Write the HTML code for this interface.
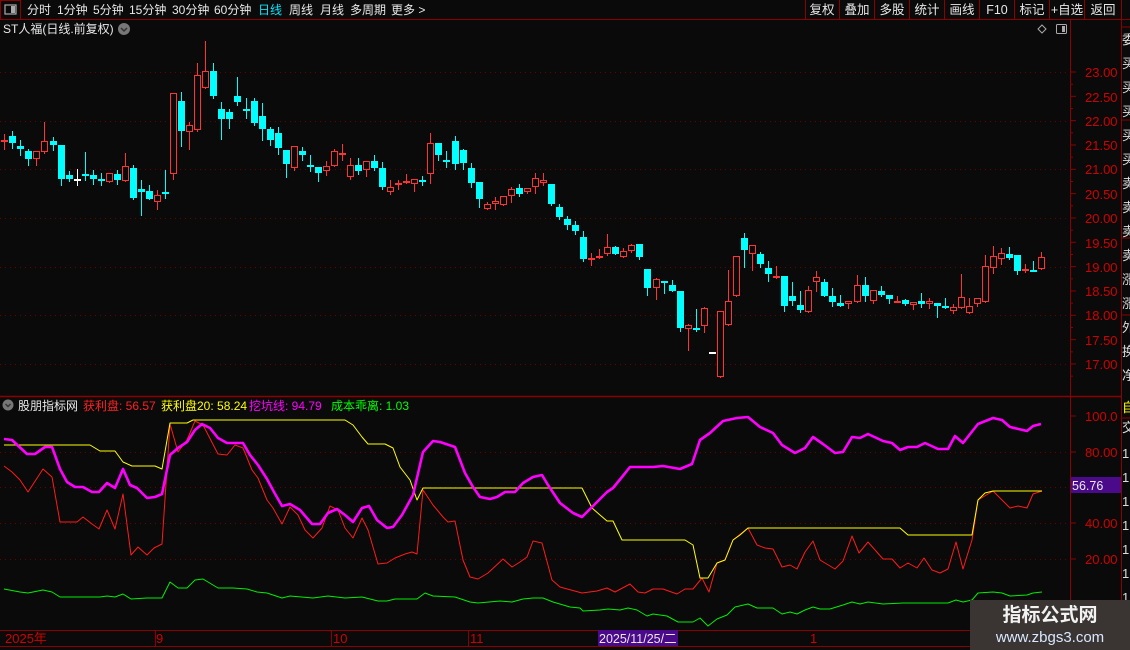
<!DOCTYPE html>
<html><head><meta charset="utf-8">
<style>
html,body{margin:0;padding:0;background:#0a0a0a;width:1130px;height:650px;overflow:hidden;font-family:"Liberation Sans","Noto Sans CJK SC",sans-serif;}
svg{display:block}
text{font-family:"Liberation Sans","Noto Sans CJK SC",sans-serif;}
</style></head><body>
<svg id="s" width="1130" height="650" xmlns="http://www.w3.org/2000/svg">
<rect width="1130" height="650" fill="#0a0a0a"/>
<line x1="0" y1="19.5" x2="1130" y2="19.5" stroke="#8b0000"/>
<rect x="0.5" y="0.5" width="20" height="19" fill="none" stroke="#8b0000"/>
<rect x="5" y="5" width="11" height="9" fill="none" stroke="#aaa" stroke-width="1.2"/>
<rect x="11" y="6" width="4" height="7" fill="#aaa"/>
<g font-size="12" fill="#e8e8e8">
<text x="27" y="14">分时</text><text x="57" y="14">1分钟</text><text x="93" y="14">5分钟</text>
<text x="129" y="14">15分钟</text><text x="172" y="14">30分钟</text><text x="214" y="14">60分钟</text>
<text x="258" y="14" fill="#00e5ff">日线</text><text x="289" y="14">周线</text><text x="320" y="14">月线</text>
<text x="350" y="14">多周期</text><text x="391" y="14">更多 &gt;</text>
</g>
<g stroke="#8b0000">
<line x1="805.5" y1="0" x2="805.5" y2="19"/><line x1="839.5" y1="0" x2="839.5" y2="19"/><line x1="874.5" y1="0" x2="874.5" y2="19"/>
<line x1="909.5" y1="0" x2="909.5" y2="19"/><line x1="944.5" y1="0" x2="944.5" y2="19"/><line x1="979.5" y1="0" x2="979.5" y2="19"/>
<line x1="1014.5" y1="0" x2="1014.5" y2="19"/><line x1="1049.5" y1="0" x2="1049.5" y2="19"/><line x1="1084.5" y1="0" x2="1084.5" y2="19"/>
<line x1="1121.5" y1="0" x2="1121.5" y2="19"/>
</g>
<g font-size="12.5" fill="#e8e8e8" text-anchor="middle">
<text x="822" y="14">复权</text><text x="857" y="14">叠加</text><text x="892" y="14">多股</text><text x="927" y="14">统计</text>
<text x="962" y="14">画线</text><text x="997" y="14">F10</text><text x="1032" y="14">标记</text><text x="1067" y="14">+自选</text><text x="1103" y="14">返回</text>
</g>
<text x="3" y="33" font-size="12" fill="#e8e8e8">ST人福(日线.前复权)</text>
<circle cx="124" cy="29" r="6" fill="#777"/>
<path d="M121 28 L124 31 L127 28" stroke="#333" stroke-width="1.5" fill="none"/>
<path d="M1042 25 L1046 29 L1042 33 L1038 29 Z" fill="none" stroke="#aaa"/>
<rect x="1056.5" y="24.5" width="10" height="9" fill="none" stroke="#aaa" rx="1"/>
<rect x="1062" y="26" width="3" height="6" fill="#aaa"/>
<line x1="1070.5" y1="19" x2="1070.5" y2="650" stroke="#8b0000"/>
<line x1="1121.5" y1="19" x2="1121.5" y2="650" stroke="#8b0000"/>
<line x1="0" y1="396.5" x2="1121" y2="396.5" stroke="#8b0000" stroke-width="1.5"/>
<line x1="0" y1="630.5" x2="1070" y2="630.5" stroke="#8b0000"/>
<line x1="0" y1="646.5" x2="1070" y2="646.5" stroke="#8b0000"/>
<g id="grid" stroke="#6a0000" stroke-dasharray="1,4"></g>
<g id="candles"></g>
<g font-size="13" fill="#d00000">
<text x="1085" y="77">23.00</text><text x="1085" y="102">22.50</text><text x="1085" y="126">22.00</text>
<text x="1085" y="150">21.50</text><text x="1085" y="174">21.00</text><text x="1085" y="199">20.50</text>
<text x="1085" y="223">20.00</text><text x="1085" y="248">19.50</text><text x="1085" y="272">19.00</text>
<text x="1085" y="296">18.50</text><text x="1085" y="320">18.00</text><text x="1085" y="345">17.50</text>
<text x="1085" y="369">17.00</text>
</g>
<g id="ticks" stroke="#8b0000"></g>
<circle cx="8" cy="405" r="5.5" fill="#777"/>
<path d="M5.5 404 L8 406.5 L10.5 404" stroke="#333" stroke-width="1.4" fill="none"/>
<g font-size="12">
<text x="18" y="410" fill="#e8e8e8">股朋指标网</text>
<text x="83" y="410" fill="#ff2020">获利盘: 56.57</text>
<text x="161" y="410" fill="#ffff00">获利盘20: 58.24</text>
<text x="249" y="410" fill="#ff00ff">挖坑线: 94.79</text>
<text x="331" y="410" fill="#00ff00">成本乖离: 1.03</text>
</g>
<g id="lines" fill="none"></g>
<g font-size="13" fill="#d00000">
<text x="1085" y="421">100.0</text><text x="1085" y="457">80.00</text>
<text x="1085" y="528">40.00</text><text x="1085" y="564">20.00</text>
</g>
<rect x="1071" y="477" width="50" height="16" fill="#4a0a8a"/>
<text x="1072" y="490" font-size="12.5" fill="#e8e8e8">56.76</text>
<g stroke="#8b0000"><line x1="1121" y1="27" x2="1130" y2="27"/><line x1="1121" y1="120" x2="1130" y2="120"/><line x1="1121" y1="238" x2="1130" y2="238"/><line x1="1121" y1="315" x2="1130" y2="315"/><line x1="1121" y1="418" x2="1130" y2="418"/></g>
<g font-size="13" fill="#ddd">
<text x="1122" y="44">委</text><text x="1122" y="68">买</text><text x="1122" y="92">买</text><text x="1122" y="116">买</text><text x="1122" y="140">买</text><text x="1122" y="164">买</text><text x="1122" y="188">卖</text><text x="1122" y="212">卖</text><text x="1122" y="236">卖</text><text x="1122" y="260">卖</text><text x="1122" y="284">涨</text><text x="1122" y="308">涨</text><text x="1122" y="332">外</text><text x="1122" y="356">换</text><text x="1122" y="380">净</text>
<text x="1122" y="412" fill="#ffff00">自</text><text x="1122" y="432">交</text>
<text x="1122" y="458">1</text><text x="1122" y="482">1</text><text x="1122" y="506">1</text><text x="1122" y="530">1</text><text x="1122" y="554">1</text><text x="1122" y="578">1</text><text x="1122" y="602">1</text>
</g>
<g font-size="13" fill="#d00000">
<text x="5" y="643">2025年</text><text x="156" y="643">9</text><text x="333" y="643">10</text><text x="470" y="643">11</text>
</g>
<g stroke="#8b0000"><line x1="155.5" y1="630" x2="155.5" y2="646"/><line x1="331.5" y1="630" x2="331.5" y2="646"/><line x1="468.5" y1="630" x2="468.5" y2="646"/></g>
<rect x="598" y="630" width="80" height="16" fill="#4a0a8a"/>
<text x="599" y="643" font-size="12.5" fill="#e8e8e8">2025/11/25/二</text>
<text x="810" y="643" font-size="13" fill="#d00000">1</text>
<rect x="970" y="600" width="160" height="50" fill="#3a3532"/>
<text x="1050" y="621" font-size="19" font-weight="bold" fill="#f2f2f2" text-anchor="middle">指标公式网</text>
<text x="1050" y="642" font-size="15" fill="#d8e8ff" text-anchor="middle">www.zbgs3.com</text>
</svg>
<script>
var NS="http://www.w3.org/2000/svg";
function el(p,t,a){var e=document.createElementNS(NS,t);for(var k in a)e.setAttribute(k,a[k]);p.appendChild(e);return e;}
var g=document.getElementById('grid');
[72,121,169,218,267,315,364].forEach(function(y){el(g,'line',{x1:0,y1:y+.5,x2:1070,y2:y+.5});});
[452,487,523,559].forEach(function(y){el(g,'line',{x1:0,y1:y+.5,x2:1070,y2:y+.5});});
var tk=document.getElementById('ticks');
for(var i=0;i<13;i++){var y=72+i*24.33;el(tk,'line',{x1:1070,y1:y,x2:1076,y2:y});el(tk,'line',{x1:1070,y1:y+12.2,x2:1073,y2:y+12.2});}
[416,452,487,523,559].forEach(function(y){el(tk,'line',{x1:1070,y1:y,x2:1076,y2:y});});
var D=[[140,141,134,149,'r'],[136,143,131,148,'c'],[146,149,140,155,'c'],[151,159,149,165,'c'],[151,159,151,165,'r'],[141,152,122,153,'r'],[141,145,137,150,'c'],[145,179,145,185,'c'],[175,179,171,181,'c'],[179,180,169,185,'w'],[174,175,152,180,'c'],[175,179,170,184,'c'],[179,181,173,185,'c'],[173,182,173,182,'r'],[174,180,170,184,'c'],[166,181,153,181,'r'],[168,198,165,199,'c'],[189,192,180,215,'c'],[191,199,185,199,'c'],[195,202,190,209,'r'],[192,193,170,198,'c'],[93,174,93,179,'r'],[101,131,92,146,'c'],[125,132,122,149,'r'],[75,130,63,131,'r'],[71,88,41,88,'r'],[71,96,63,98,'c'],[109,119,102,139,'c'],[112,119,109,128,'c'],[96,102,77,105,'c'],[109,110,98,118,'c'],[101,123,98,125,'c'],[116,129,103,140,'c'],[129,140,127,145,'c'],[133,148,127,154,'c'],[150,164,150,177,'c'],[146,168,146,170,'r'],[151,155,147,160,'c'],[165,166,155,171,'c'],[167,173,167,181,'c'],[166,171,161,175,'r'],[151,166,149,166,'r'],[153,155,144,160,'r'],[165,177,158,179,'r'],[165,171,158,174,'c'],[161,170,161,176,'r'],[161,168,155,170,'c'],[168,187,162,189,'c'],[187,192,180,194,'r'],[183,184,180,189,'r'],[181,182,174,183,'r'],[179,184,179,191,'r'],[180,181,176,185,'c'],[143,174,133,183,'r'],[143,155,143,160,'c'],[160,161,151,167,'c'],[141,164,136,169,'c'],[150,163,149,169,'c'],[168,183,163,187,'c'],[182,199,182,207,'c'],[204,209,202,209,'r'],[201,204,197,209,'r'],[196,205,196,205,'r'],[189,196,187,202,'r'],[188,194,184,196,'c'],[188,192,188,193,'r'],[178,187,173,193,'r'],[180,183,173,185,'r'],[184,204,184,205,'c'],[207,217,204,219,'c'],[219,225,216,229,'c'],[225,231,221,234,'c'],[237,259,231,261,'c'],[258,259,253,265,'r'],[256,257,249,258,'r'],[247,254,234,255,'r'],[247,254,246,254,'c'],[251,257,248,257,'r'],[245,251,244,252,'r'],[244,257,244,259,'c'],[269,288,269,295,'c'],[279,288,278,299,'r'],[281,283,281,293,'c'],[285,291,280,291,'c'],[291,328,291,331,'c'],[325,329,324,350,'r'],[328,329,309,331,'c'],[308,326,307,332,'r'],[352,353,352,353,'w'],[311,377,311,377,'r'],[301,325,270,325,'r'],[256,296,256,296,'r'],[238,250,233,267,'c'],[245,254,245,270,'r'],[254,264,252,267,'c'],[268,274,261,281,'c'],[276,277,266,278,'r'],[276,306,276,311,'c'],[296,301,282,305,'c'],[305,310,291,312,'c'],[290,312,286,312,'r'],[277,282,271,291,'r'],[282,296,279,296,'c'],[296,302,288,306,'c'],[303,306,295,306,'c'],[301,304,301,308,'r'],[285,302,275,302,'r'],[285,296,277,301,'c'],[290,301,290,303,'r'],[291,295,286,296,'c'],[295,299,295,303,'c'],[301,302,296,302,'r'],[300,304,299,305,'c'],[302,305,302,309,'r'],[301,304,293,307,'c'],[301,304,298,308,'r'],[303,306,303,317,'c'],[306,308,298,308,'c'],[307,311,304,313,'r'],[297,308,274,308,'r'],[306,313,298,313,'r'],[298,304,298,306,'r'],[266,302,255,302,'r'],[256,268,246,273,'r'],[253,259,248,264,'r'],[254,258,247,259,'c'],[255,271,255,274,'c'],[269,270,264,272,'r'],[270,271,261,271,'c'],[257,269,252,269,'r']];
var cg=document.getElementById('candles');
D.forEach(function(d,i){
 var x=Math.round(4.3+8.04*i),col=d[4]=='r'?'#ff3333':(d[4]=='c'?'#00ffff':'#ffffff');
 var t=d[0],b=d[1];
 el(cg,'line',{x1:x+.5,y1:d[2],x2:x+.5,y2:t,stroke:col});
 el(cg,'line',{x1:x+.5,y1:b,x2:x+.5,y2:d[3]+1,stroke:col});
 if(b-t<=1){el(cg,'rect',{x:x-3,y:t,width:7,height:2,fill:col});}
 else if(d[4]=='r'){el(cg,'rect',{x:x-2.5,y:t+.5,width:6,height:b-t-1,fill:'#0a0a0a',stroke:col});}
 else{el(cg,'rect',{x:x-3,y:t,width:7,height:b-t,fill:col});}
});
var L=document.getElementById('lines');
function pl(pts,c,w){el(L,'polyline',{points:pts,stroke:c,'stroke-width':w,'stroke-linejoin':'round'});}
pl("4,466 12,472 20,480 28,492 43,469 52,477 60,522 77,522 83,517 92,524 99,529 107,510 115,529 123,494 131,555 138,547 147,555 154,548 162,544 170,424 178,452 187,440 195,421 203,425 218,454 227,455 235,445 243,448 252,470 258,478 267,500 273,508 282,524 290,507 298,515 305,530 313,538 322,528 330,506 338,510 345,528 353,538 362,518 368,530 378,564 387,563 395,558 405,554 412,552 417,554 423,490 433,505 443,517 448,522 455,521 463,560 470,577 478,579 488,573 503,559 512,567 520,562 527,557 533,541 542,543 552,580 560,587 582,593 597,591 607,588 615,592 630,584 638,592 645,593 653,589 663,589 677,594 685,589 693,589 702,578 709,592 717,563 725,560 733,540 748,528 757,545 765,548 773,549 782,567 790,565 797,569 805,552 813,541 820,560 835,569 843,561 852,536 859,553 868,542 883,559 892,559 900,568 908,563 917,568 924,558 932,570 940,573 948,569 956,542 963,569 972,540 978,500 993,491 1010,508 1018,506 1027,508 1033,494 1042,491","#ff1a1a",1);
pl("4,445 90,445 100,451 115,451 123,462 132,466 155,466 162,469 170,423 187,423 193,420 345,420 353,425 362,437 368,444 385,444 393,448 400,467 410,480 417,500 423,488 582,488 592,508 600,515 607,521 613,521 622,540 685,540 693,545 700,578 708,578 717,563 725,560 733,540 740,535 748,528 900,528 908,535 972,535 978,500 985,493 993,491 1042,491","#ffff00",1);
pl("4,439 12,440 27,454 35,454 45,447 52,447 60,469 67,482 75,487 83,487 92,492 99,492 107,483 115,488 123,469 130,485 137,488 147,498 155,497 162,494 170,455 178,448 187,442 195,430 202,424 210,428 218,438 227,443 235,443 243,443 250,455 258,465 267,479 274,492 282,506 290,504 300,510 312,524 320,524 328,513 337,509 345,515 353,522 362,508 369,506 377,520 387,528 393,527 402,515 413,495 423,452 433,441 440,442 455,447 465,473 473,487 480,497 490,499 497,497 505,492 515,492 523,483 533,477 542,475 548,485 560,503 573,513 582,517 592,507 607,492 613,488 622,477 630,467 653,467 663,466 680,469 692,464 700,440 710,433 723,421 737,418 748,417 760,427 773,433 782,445 795,453 805,448 813,437 823,444 835,453 843,452 852,437 860,438 868,434 883,441 892,443 900,450 908,447 917,447 925,443 938,449 948,449 955,436 963,443 978,424 993,418 1002,420 1010,427 1027,431 1033,426 1041,424","#ff00ff",2.6);
pl("4,589 20,592 28,593 43,590 52,592 60,597 80,597 100,597 107,596 115,597 123,594 131,599 147,598 162,598 170,582 178,588 187,588 195,580 203,579 218,588 233,588 247,589 257,592 267,593 282,598 290,596 313,598 328,596 345,598 362,597 378,601 387,601 395,599 417,599 425,593 433,596 455,597 470,602 478,603 500,601 512,602 523,599 533,598 543,598 553,602 570,607 580,608 583,611 600,610 608,609 620,610 628,608 637,610 647,616 653,614 667,616 678,622 693,622 700,618 708,626 717,619 727,615 735,607 748,604 757,608 773,608 782,614 790,612 797,614 805,610 813,607 820,609 830,609 843,605 852,602 860,604 868,602 883,604 903,603 948,603 956,600 963,602 972,600 978,593 993,592 1002,593 1010,596 1027,595 1033,593 1042,592","#00ee00",1);
</script>
</body></html>
